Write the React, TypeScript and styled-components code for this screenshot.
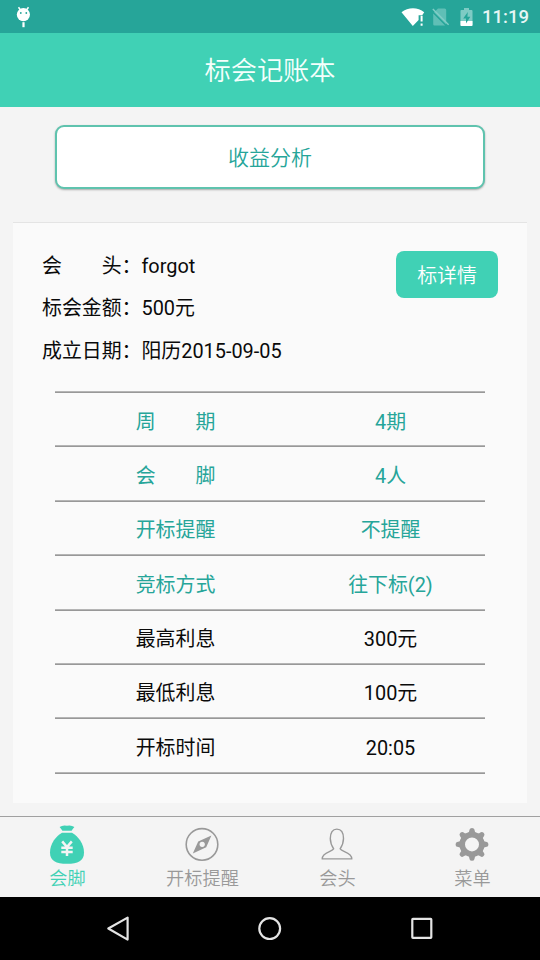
import React from "react";
import styled, { createGlobalStyle } from "styled-components";

const teal = "#40d1b5";
const deep = "#26a599";
const grey = "#999999";

const GlobalStyle = createGlobalStyle`
  * { box-sizing: border-box; }
  body { margin: 0; background: #000; }
`;

const Screen = styled.div`
  width: 540px;
  height: 960px;
  display: flex;
  flex-direction: column;
  overflow: hidden;
  background: #f4f4f4;
  font-family: Roboto, "Noto Sans CJK SC", sans-serif;
  color: #0a0a0a;
  svg { display: block; flex: none; }
`;

const StatusBar = styled.div`
  height: 33px;
  flex: none;
  padding: 0 10px 0 16px;
  display: flex;
  align-items: center;
  justify-content: space-between;
  background: ${deep};
`;

const StatusIcons = styled.div`
  display: flex;
  align-items: center;
`;

const Clock = styled.span`
  margin-left: 9px;
  width: 48px;
  padding-top: 2px;
  font-size: 18.5px;
  font-weight: 500;
  line-height: 31px;
  white-space: nowrap;
  color: #e6f6f4;
`;

const Header = styled.header`
  height: 74px;
  flex: none;
  background: ${teal};
  color: #f4fffc;
  text-align: center;
  font-size: 26.2px;
  font-weight: 350;
  line-height: 77px;
`;

const Main = styled.main`
  flex: 1;
  padding: 18px 13px 0;
`;

const AnalysisButton = styled.button`
  display: block;
  width: 430px;
  height: 64px;
  margin: 0 0 0 42px;
  padding: 2px 0 0;
  border: 2px solid #5fc3ae;
  border-radius: 9px;
  background: #fff;
  box-shadow: 0 1px 2px rgba(0, 0, 0, 0.3);
  color: ${deep};
  font: 350 21px/58px Roboto, "Noto Sans CJK SC", sans-serif;
`;

const Card = styled.section`
  margin-top: 33px;
  width: 514px;
  height: 581px;
  padding: 22px 42px 0;
  border-top: 1px solid #e4e4e4;
  background: #fafafa;
`;

const Summary = styled.div`
  display: flex;
  justify-content: space-between;
  align-items: flex-start;
  margin: 0 -13px;
  height: 146px;
`;

const Facts = styled.div`
  display: flex;
  flex-direction: column;
  padding-top: 1px;
`;

const Fact = styled.div`
  height: 42.3px;
  line-height: 42px;
  font-size: 19.9px;
  white-space: pre;
`;

const DetailButton = styled.button`
  width: 102px;
  height: 47px;
  margin: 6px 0 0;
  padding: 5px 0 0;
  border: 0;
  border-radius: 8px;
  background: ${teal};
  color: #fff;
  font: 350 19.9px/42px Roboto, "Noto Sans CJK SC", sans-serif;
`;

const Table = styled.div`
  width: 430px;
  padding-bottom: 2px;
  background: linear-gradient(#b5b5b5 0 1px, #989898 1px 2px) bottom / 100% 2px no-repeat;
`;

const Row = styled.div<{ $accent?: boolean }>`
  height: 54.4px;
  padding: 2.5px 1px 0 0;
  display: grid;
  grid-template-columns: 241px 189px;
  background: linear-gradient(#b5b5b5 0 1px, #989898 1px 2px) top / 100% 2px no-repeat;
  color: ${(p) => (p.$accent ? deep : "#0a0a0a")};
  font-size: 19.9px;
  line-height: 57px;
  text-align: center;
  white-space: pre;
`;

const TabBar = styled.nav`
  height: 81px;
  flex: none;
  display: grid;
  grid-template-columns: repeat(4, 135px);
  border-top: 1px solid #a0a0a0;
`;

const Tab = styled.div<{ $active?: boolean }>`
  display: flex;
  flex-direction: column;
  align-items: center;
  padding-top: 7px;
  color: ${(p) => (p.$active ? teal : grey)};
  svg { margin-right: 1px; }
`;

const TabLabel = styled.span`
  font-size: 18.2px;
  font-weight: 350;
  line-height: 26px;
`;

const SystemNav = styled.div`
  height: 63px;
  flex: none;
  padding: 0 105px;
  display: flex;
  align-items: center;
  justify-content: space-between;
  background: #000;
`;

const rows: { label: string; value: string; accent?: boolean }[] = [
  { label: "周　　期", value: "4期", accent: true },
  { label: "会　　脚", value: "4人", accent: true },
  { label: "开标提醒", value: "不提醒", accent: true },
  { label: "竞标方式", value: "往下标(2)", accent: true },
  { label: "最高利息", value: "300元" },
  { label: "最低利息", value: "100元" },
  { label: "开标时间", value: "20:05" },
];

const facts = ["会　　头：forgot", "标会金额：500元", "成立日期：阳历2015-09-05"];

const DebugIcon = () => (
  <svg width="15" height="22" viewBox="0 0 15 22">
    <path d="M2.5 1.2 4.5 4M12.5 1.2 10.5 4" stroke="#fff" strokeWidth="1.5" />
    <circle cx="7.4" cy="8.6" r="6.6" fill="#fff" />
    <circle cx="4.8" cy="7" r="0.9" fill={deep} />
    <circle cx="10.3" cy="7" r="0.9" fill={deep} />
    <rect x="6.4" y="16.2" width="2.2" height="5" fill="#fff" />
  </svg>
);

const WifiIcon = () => (
  <svg width="24" height="20" viewBox="0 0 24 20">
    <path d="M0.5 5.2C7 0 17 0 23.2 5.2L21.2 8.2H17.6V13L11.8 19Z" fill="#fff" />
    <path d="M20.6 8.8V14.6M20.6 16.4V18.8" stroke="#fff" strokeWidth="2" />
  </svg>
);

const NoSimIcon = () => (
  <svg width="18" height="20" viewBox="0 0 18 20">
    <path d="M2 5.2 14.2 17.4V3Q14.2 1.5 12.7 1.5H6L4.2 3.3 3.6 3.9ZM1.2 6.5V17.2Q1.2 18.6 2.6 18.6H13.1Z" fill="#60bfb6" />
    <path d="M0.8 2 16.6 17.8" stroke="#83cec7" strokeWidth="1.4" />
  </svg>
);

const BatteryIcon = () => (
  <svg width="13" height="20" viewBox="0 0 13 20">
    <path d="M4 1H9V3H11.6Q12.5 3 12.5 4V18Q12.5 19 11.6 19H1.4Q0.5 19 0.5 18V4Q0.5 3 1.4 3H4Z" fill="#7ecbc4" />
    <path d="M0.5 14H12.5V18Q12.5 19 11.6 19H1.4Q0.5 19 0.5 18Z" fill="#fff" />
    <path d="M7.8 5 3.2 11.4H6V16.5L10.3 9.8H7.4Z" fill={deep} />
  </svg>
);

const MoneyBagIcon = () => (
  <svg width="36" height="42" viewBox="0 0 36 42">
    <path d="M10.6 3Q14 .6 18 1.8Q22 .6 25.4 3Q23.5 5 22.6 6.8H13.4Q12.4 5 10.6 3Z" fill={teal} />
    <path d="M13 8.8H23C29 12 35 20 35 28.5C35 37 29 39.8 18 39.8S1 37 1 28.5C1 20 7 12 13 8.8Z" fill={teal} />
    <path d="M13.2 17.4 18 23 22.8 17.4M18 23V32M12.3 23.7H23.7M12.3 28H23.7" fill="none" stroke="#f4f4f4" strokeWidth="2.5" />
  </svg>
);

const CompassIcon = () => (
  <svg width="36" height="42" viewBox="0 0 36 42">
    <circle cx="18" cy="20.4" r="15.8" fill="none" stroke={grey} strokeWidth="1.6" />
    <path fillRule="evenodd" d="M27.4 11.4 22.2 23.2 8.8 29.4 14.2 17.4ZM18.2 17.7a2.7 2.7 0 1 0 .01 0Z" fill={grey} />
  </svg>
);

const PersonIcon = () => (
  <svg width="36" height="42" viewBox="0 0 36 42">
    <path
      d="M14.7 24.8C12.6 21.8 11.3 18.5 11.3 14.6C11.3 8.8 13.6 5.1 17.8 5.1S24.5 8.8 24.5 14.6C24.5 18.5 23.2 21.8 21.1 24.8C22.4 28 32.8 28 32.8 34.9H3.2C3.2 28 13.4 28 14.7 24.8Z"
      fill="none"
      stroke={grey}
      strokeWidth="1.4"
      strokeLinejoin="round"
    />
  </svg>
);

const teeth = [0, 45, 90, 135, 180, 225, 270, 315];

const GearIcon = () => (
  <svg width="36" height="42" viewBox="0 0 36 42">
    <circle cx="18" cy="20.4" r="9.8" fill="none" stroke={grey} strokeWidth="5.6" />
    {teeth.map((angle) => (
      <path
        key={angle}
        d="M13.1 10.2Q15.4 9 15.6 5.6Q15.9 4 18 4T20.4 5.6Q20.6 9 22.9 10.2Z"
        fill={grey}
        transform={`rotate(${angle} 18 20.4)`}
      />
    ))}
  </svg>
);

export default function App() {
  return (
    <>
      <GlobalStyle />
      <Screen>
        <StatusBar>
          <DebugIcon />
          <StatusIcons>
            <WifiIcon />
            <svg width="7" height="1" />
            <NoSimIcon />
            <svg width="10" height="1" />
            <BatteryIcon />
            <Clock>11:19</Clock>
          </StatusIcons>
        </StatusBar>
        <Header>标会记账本</Header>
        <Main>
          <AnalysisButton>收益分析</AnalysisButton>
          <Card>
            <Summary>
              <Facts>
                {facts.map((fact) => (
                  <Fact key={fact}>{fact}</Fact>
                ))}
              </Facts>
              <DetailButton>标详情</DetailButton>
            </Summary>
            <Table>
              {rows.map((row) => (
                <Row key={row.label} $accent={row.accent}>
                  <span>{row.label}</span>
                  <span>{row.value}</span>
                </Row>
              ))}
            </Table>
          </Card>
        </Main>
        <TabBar>
          <Tab $active>
            <MoneyBagIcon />
            <TabLabel>会脚</TabLabel>
          </Tab>
          <Tab>
            <CompassIcon />
            <TabLabel>开标提醒</TabLabel>
          </Tab>
          <Tab>
            <PersonIcon />
            <TabLabel>会头</TabLabel>
          </Tab>
          <Tab>
            <GearIcon />
            <TabLabel>菜单</TabLabel>
          </Tab>
        </TabBar>
        <SystemNav>
          <svg width="26" height="28" viewBox="0 0 26 28" fill="none" stroke="#e4e4e4" strokeWidth="2.2" strokeLinejoin="round">
            <path d="M3.3 13.5 22.6 2.6V24.6Z" />
          </svg>
          <svg width="26" height="28" viewBox="0 0 26 28" fill="none" stroke="#e4e4e4" strokeWidth="2.2">
            <circle cx="12.7" cy="13.6" r="10.4" />
          </svg>
          <svg width="26" height="28" viewBox="0 0 26 28" fill="none" stroke="#e4e4e4" strokeWidth="2.2" strokeLinejoin="round">
            <rect x="3.3" y="3.8" width="19" height="19" rx="0.6" />
          </svg>
        </SystemNav>
      </Screen>
    </>
  );
}
